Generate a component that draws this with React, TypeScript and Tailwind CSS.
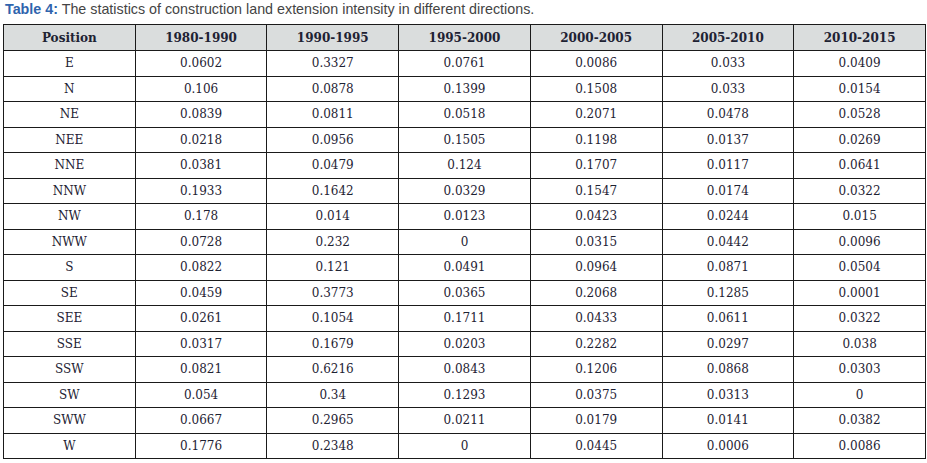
import React from "react";

const headers = ["Position", "1980-1990", "1990-1995", "1995-2000", "2000-2005", "2005-2010", "2010-2015"];

const rows: string[][] = [
  ["E", "0.0602", "0.3327", "0.0761", "0.0086", "0.033", "0.0409"],
  ["N", "0.106", "0.0878", "0.1399", "0.1508", "0.033", "0.0154"],
  ["NE", "0.0839", "0.0811", "0.0518", "0.2071", "0.0478", "0.0528"],
  ["NEE", "0.0218", "0.0956", "0.1505", "0.1198", "0.0137", "0.0269"],
  ["NNE", "0.0381", "0.0479", "0.124", "0.1707", "0.0117", "0.0641"],
  ["NNW", "0.1933", "0.1642", "0.0329", "0.1547", "0.0174", "0.0322"],
  ["NW", "0.178", "0.014", "0.0123", "0.0423", "0.0244", "0.015"],
  ["NWW", "0.0728", "0.232", "0", "0.0315", "0.0442", "0.0096"],
  ["S", "0.0822", "0.121", "0.0491", "0.0964", "0.0871", "0.0504"],
  ["SE", "0.0459", "0.3773", "0.0365", "0.2068", "0.1285", "0.0001"],
  ["SEE", "0.0261", "0.1054", "0.1711", "0.0433", "0.0611", "0.0322"],
  ["SSE", "0.0317", "0.1679", "0.0203", "0.2282", "0.0297", "0.038"],
  ["SSW", "0.0821", "0.6216", "0.0843", "0.1206", "0.0868", "0.0303"],
  ["SW", "0.054", "0.34", "0.1293", "0.0375", "0.0313", "0"],
  ["SWW", "0.0667", "0.2965", "0.0211", "0.0179", "0.0141", "0.0382"],
  ["W", "0.1776", "0.2348", "0", "0.0445", "0.0006", "0.0086"],
];

export default function App() {
  return (
    <div className="w-[927px] h-[463px] bg-white overflow-hidden">
      <div className="h-[24px] pl-[5px] pt-[1px] text-[14.3px] leading-[16px] font-['Liberation_Sans',Arial,sans-serif] text-[#444] whitespace-nowrap">
        <span className="font-bold text-[#2f64ad]">Table 4:</span> The statistics of construction land extension intensity in different directions.
      </div>
      <table className="ml-[3px] w-[923px] table-fixed border-collapse font-['DejaVu_Serif',serif] text-[12px] text-[#1e2233]">
        <thead>
          <tr className="bg-[#dadddd]">
            {headers.map((h) => (
              <th key={h} className="h-[26px] p-0 border border-[#1a1a1a] font-bold text-center align-middle leading-none">
                {h}
              </th>
            ))}
          </tr>
        </thead>
        <tbody>
          {rows.map((r) => (
            <tr key={r[0]}>
              {r.map((c, i) => (
                <td key={i} className="h-[25.5px] p-0 border border-[#1a1a1a] text-center align-middle leading-none">
                  {c}
                </td>
              ))}
            </tr>
          ))}
        </tbody>
      </table>
    </div>
  );
}
